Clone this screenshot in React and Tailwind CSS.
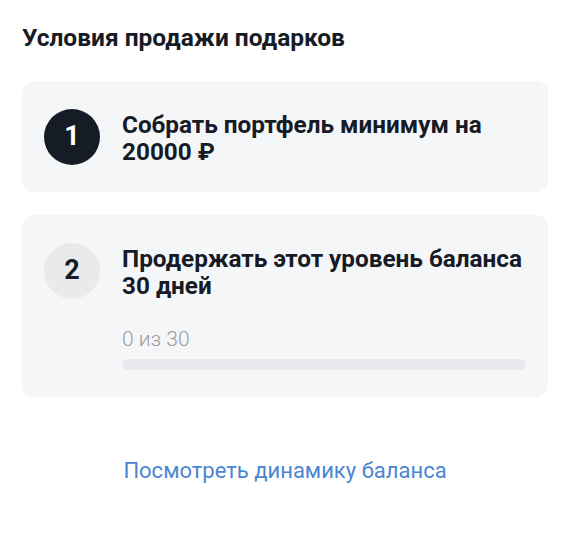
export default function App() {
  const steps = [
    { n: 1, text: "Собрать портфель минимум на 20000 ₽", done: true },
    { n: 2, text: "Продержать этот уровень баланса 30 дней", done: false, progress: { value: 0, total: 30 } },
  ];

  return (
    <div className="w-[570px] h-[545px] bg-white px-[22px] pt-[22px] font-['Roboto',sans-serif] text-[#161b26]">
      <h2 className="text-[24.5px] leading-[32px] font-bold">Условия продажи подарков</h2>

      <div className="mt-[27px] flex flex-col gap-[23px]">
        {steps.map((s) => (
          <div key={s.n} className="bg-[#f5f6f8] rounded-[12px] px-[22px] py-[27.5px]">
            <div className={`flex gap-[22px] ${s.progress ? "items-start" : "items-center"}`}>
              <div
                className={`w-[56px] h-[56px] shrink-0 rounded-full flex items-center justify-center text-[27px] font-bold
                  ${s.done ? "bg-[#161c26] text-white" : "bg-[#e9eaec] text-[#161b26]"}`}
              >
                {s.n}
              </div>
              <div className="flex-1 pt-[2px]">
                <p className="text-[24.3px] leading-[27px] font-bold">{s.text}</p>
                {s.progress && (
                  <div className="mt-[28px]">
                    <p className="text-[21px] leading-[24px] font-light text-[#9a9ca1]">
                      {s.progress.value} из {s.progress.total}
                    </p>
                    <div className="mt-[8px] h-[11px] rounded-full bg-[#e8e9ec]">
                      <div
                        className="h-full rounded-full bg-[#161c26]"
                        style={{ width: `${(s.progress.value / s.progress.total) * 100}%` }}
                      />
                    </div>
                  </div>
                )}
              </div>
            </div>
          </div>
        ))}
      </div>

      <div className="mt-[60px] text-center">
        <a className="text-[22px] leading-[28px] text-[#4a86d2]">Посмотреть динамику баланса</a>
      </div>
    </div>
  );
}
